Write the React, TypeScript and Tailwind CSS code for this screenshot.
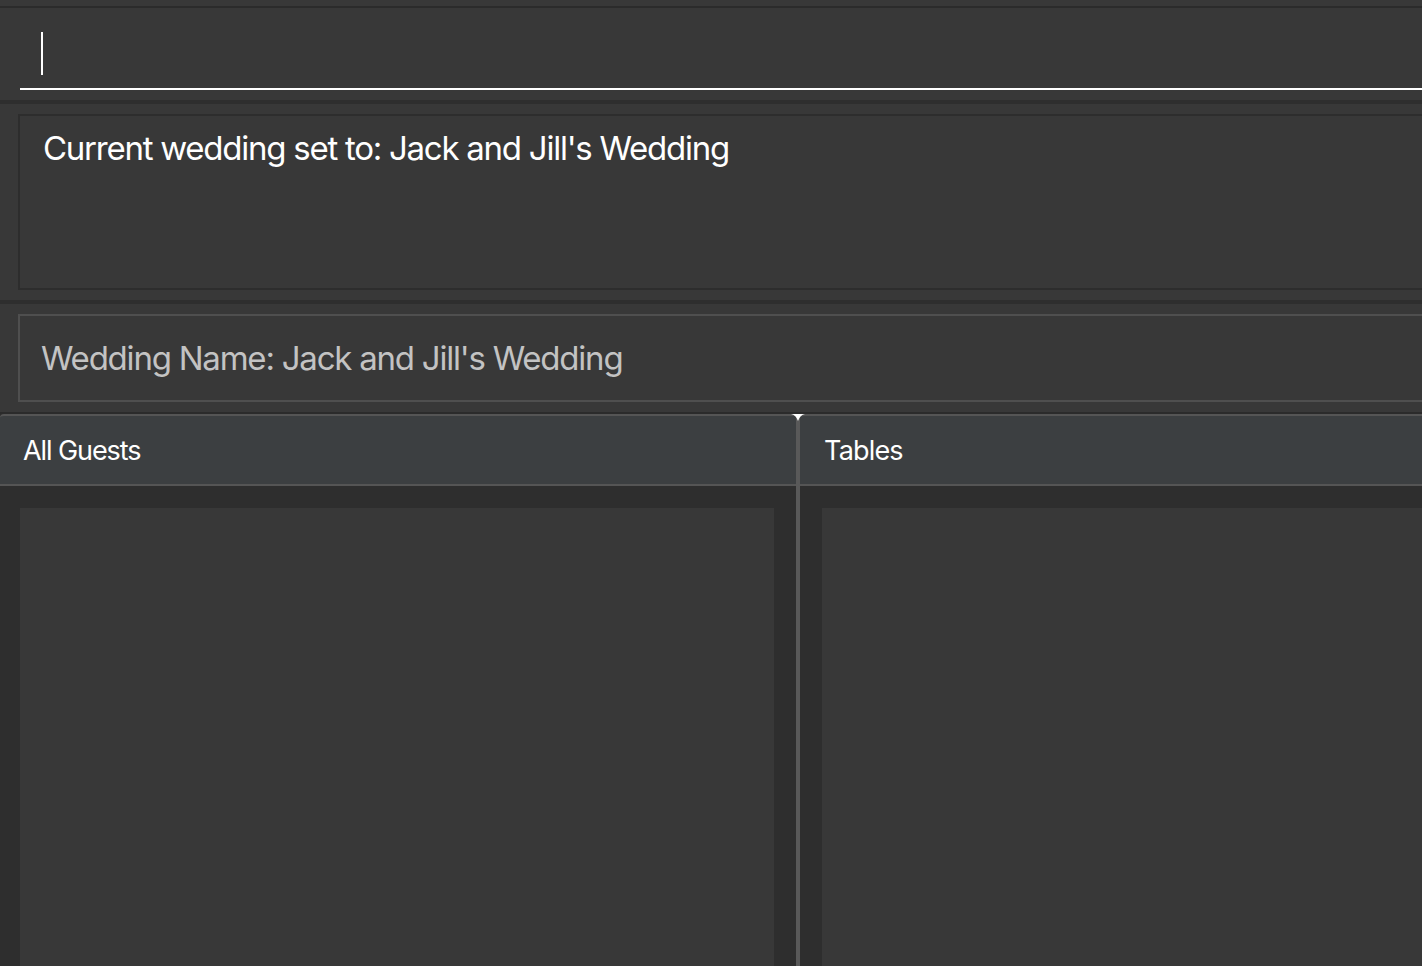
import React from "react";

export default function App() {
  const font = { fontFamily: "Inter, 'Open Sans', sans-serif" };
  return (
    <div className="w-[1422px] h-[966px] overflow-hidden bg-[#383838] flex flex-col" style={font}>
      <div className="h-[6px] bg-[#383838]" />
      <div className="h-[2px] bg-[#2b2b2b]" />
      {/* command box */}
      <div className="h-[92px] bg-[#383838] flex flex-col pl-[20px]">
        <div className="h-[80px] relative">
          <div className="absolute left-[21px] top-[24px] w-[2px] h-[43px] bg-white" />
        </div>
        <div className="h-[2px] bg-white" />
      </div>
      <div className="h-[4px] bg-[#2e2e2e]" />
      {/* result */}
      <div className="h-[196px] bg-[#383838] pl-[18px] pt-[10px] pb-[10px]">
        <div className="h-full border-2 border-r-0 border-[#2d2d2d] pl-[23px] pt-[12px]">
          <div className="text-[33px] text-white tracking-[-0.038em] leading-[40px]">
            Current wedding set to: Jack and Jill's Wedding
          </div>
        </div>
      </div>
      <div className="h-[4px] bg-[#2e2e2e]" />
      {/* wedding name */}
      <div className="h-[108px] bg-[#383838] pl-[18px] pt-[10px] pb-[10px]">
        <div className="h-full border-2 border-r-0 border-[#4f4f4f] pl-[21px] flex items-center">
          <div className="text-[33px] text-[#c3c3c3] tracking-[-0.037em] leading-[40px]">
            Wedding Name: Jack and Jill's Wedding
          </div>
        </div>
      </div>
      <div className="h-[2px] bg-[#2b2b2b]" />
      {/* panels */}
      <div className="flex-1 flex bg-[#2e2e2e] relative">
        <div className="w-[796px] flex flex-col">
          <div className="h-[72px] bg-[#3c3f41] border-t-2 border-b-2 border-[#555555] rounded-tl-[4px] flex items-center pl-[23px] pt-[2px]">
            <span className="text-[27px] text-white tracking-[-0.04em]">All Guests</span>
          </div>
          <div className="flex-1 pt-[22px] pl-[20px] pr-[22px]">
            <div className="h-full bg-[#383838]" />
          </div>
        </div>
        <div className="w-[4px] bg-[#595959]" />
        <div className="flex-1 flex flex-col">
          <div className="h-[72px] bg-[#3c3f41] border-t-2 border-b-2 border-[#555555] rounded-tl-[4px] flex items-center pl-[24px] pt-[2px]">
            <span className="text-[27px] text-white tracking-[-0.03em]">Tables</span>
          </div>
          <div className="flex-1 pt-[22px] pl-[22px]">
            <div className="h-full bg-[#383838]" />
          </div>
        </div>
        <svg className="absolute left-[791px] top-0" width="14" height="8" viewBox="0 0 14 8">
          <path d="M0 0 H14 Q9 1 7 7 Q5 1 0 0 Z" fill="#ffffff" />
        </svg>
      </div>
    </div>
  );
}
